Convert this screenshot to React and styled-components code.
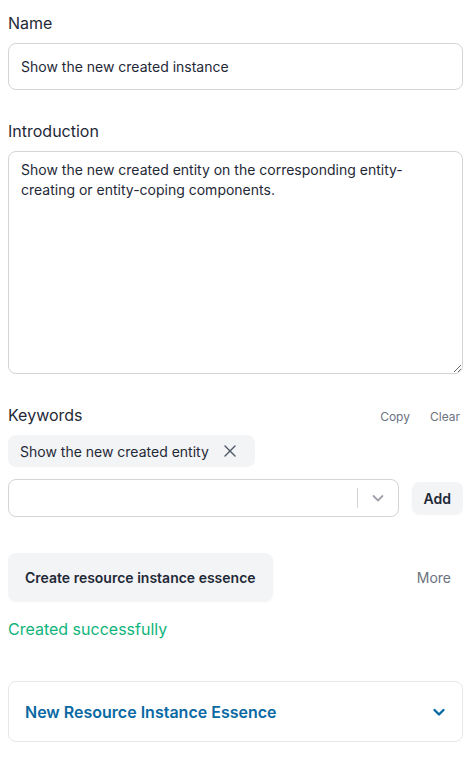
import React from "react";
import styled, { createGlobalStyle } from "styled-components";

const Global = createGlobalStyle`
  * { box-sizing: border-box; }
  body {
    margin: 8px;
    font-family: Inter, "Noto Sans", sans-serif;
    color: #1f2937;
    background: #fff;
  }
`;

const Page = styled.div`
  display: flex;
  flex-direction: column;
  width: 455px;
`;

const Field = styled.div`
  display: flex;
  flex-direction: column;
  margin-bottom: ${(p) => p.$mb || 0}px;
`;

const LabelRow = styled.div`
  display: flex;
  align-items: center;
  justify-content: space-between;
  height: 28px;
  margin-bottom: 7px;
`;

const Label = styled.label`
  font-size: 16px;
  line-height: 28px;
  padding-top: 2px;
  color: #1f2937;
`;

const Input = styled.input`
  height: 47px;
  border: 1px solid #d4d4d8;
  border-radius: 8px;
  padding: 0 12px;
  font: inherit;
  font-size: 14px;
  color: #1f2937;
  outline: none;
`;

const TextArea = styled.textarea`
  height: 223px;
  border: 1px solid #d4d4d8;
  border-radius: 8px;
  padding: 8px 12px;
  font: inherit;
  font-size: 14px;
  line-height: 20px;
  color: #1f2937;
  resize: vertical;
  outline: none;
`;

const Actions = styled.div`
  display: flex;
  gap: 20px;
  padding-right: 3px;
  padding-top: 4px;
`;

const TextButton = styled.button`
  border: none;
  background: none;
  padding: 0;
  font: inherit;
  font-size: ${(p) => p.$size || 12}px;
  color: #6b7280;
  cursor: pointer;
`;

const Tag = styled.div`
  align-self: flex-start;
  display: flex;
  align-items: center;
  height: 32px;
  padding: 0 14px 0 12px;
  gap: 10px;
  background: #f3f4f6;
  border-radius: 8px;
  font-size: 14px;
  color: #1f2937;
  margin-bottom: 12px;
`;

const TagClose = styled.span`
  display: flex;
  align-items: center;
  justify-content: center;
  width: 22px;
  height: 22px;
  color: #4b5563;
`;

const SelectRow = styled.div`
  display: flex;
  align-items: center;
  gap: 13px;
  margin-bottom: 36px;
`;

const Select = styled.div`
  flex: 1;
  display: flex;
  align-items: center;
  height: 38px;
  border: 1px solid #d4d4d8;
  border-radius: 8px;
`;

const SelectValue = styled.div`
  flex: 1;
`;

const Separator = styled.span`
  width: 1px;
  height: 20px;
  background: #d4d4d8;
`;

const Indicator = styled.span`
  width: 40px;
  display: flex;
  align-items: center;
  justify-content: center;
  color: #a1a1aa;
`;

const SoftButton = styled.button`
  border: none;
  background: #f3f4f6;
  border-radius: 8px;
  height: ${(p) => p.$h}px;
  padding: 0 ${(p) => p.$px}px;
  font: inherit;
  font-size: 14px;
  font-weight: 600;
  color: #1f2937;
  box-shadow: 0 1px 2px rgba(0, 0, 0, 0.05);
  cursor: pointer;
`;

const ButtonRow = styled.div`
  display: flex;
  align-items: center;
  justify-content: space-between;
  padding-right: 12px;
  margin-bottom: 16px;
`;

const Success = styled.div`
  font-size: 16px;
  line-height: 24px;
  color: #10b37a;
  margin-bottom: 40px;
`;

const Card = styled.div`
  display: flex;
  align-items: center;
  justify-content: space-between;
  height: 61px;
  border: 1px solid #e5e7eb;
  border-radius: 8px;
  padding: 0 16px 0 16px;
`;

const CardTitle = styled.div`
  font-size: 16px;
  font-weight: 600;
  color: #0a69a3;
`;

export default function App() {
  return (
    <Page>
      <Global />
      <Field $mb={26}>
        <LabelRow>
          <Label>Name</Label>
        </LabelRow>
        <Input defaultValue="Show the new created instance" />
      </Field>
      <Field $mb={26}>
        <LabelRow>
          <Label>Introduction</Label>
        </LabelRow>
        <TextArea defaultValue="Show the new created entity on the corresponding entity-creating or entity-coping components." />
      </Field>
      <Field>
        <LabelRow>
          <Label>Keywords</Label>
          <Actions>
            <TextButton>Copy</TextButton>
            <TextButton>Clear</TextButton>
          </Actions>
        </LabelRow>
        <Tag>
          Show the new created entity
          <TagClose>
            <svg width="12" height="12" viewBox="0 0 12 12" fill="none" stroke="currentColor" strokeWidth="1.4" strokeLinecap="round">
              <path d="M1 1L11 11M11 1L1 11" />
            </svg>
          </TagClose>
        </Tag>
        <SelectRow>
          <Select>
            <SelectValue />
            <Separator />
            <Indicator>
              <svg width="14" height="14" viewBox="0 0 14 14" fill="none" stroke="currentColor" strokeWidth="1.8" strokeLinecap="round" strokeLinejoin="round">
                <path d="M2.5 5L7 9.5L11.5 5" />
              </svg>
            </Indicator>
          </Select>
          <SoftButton $h={32} $px={12}>Add</SoftButton>
        </SelectRow>
      </Field>
      <ButtonRow>
        <SoftButton $h={48} $px={17}>Create resource instance essence</SoftButton>
        <TextButton $size={14}>More</TextButton>
      </ButtonRow>
      <Success>Created successfully</Success>
      <Card>
        <CardTitle>New Resource Instance Essence</CardTitle>
        <svg width="14" height="14" viewBox="0 0 14 14" fill="none" stroke="#0a69a3" strokeWidth="2.4" strokeLinecap="round" strokeLinejoin="round">
          <path d="M2.5 5L7 9.5L11.5 5" />
        </svg>
      </Card>
    </Page>
  );
}
